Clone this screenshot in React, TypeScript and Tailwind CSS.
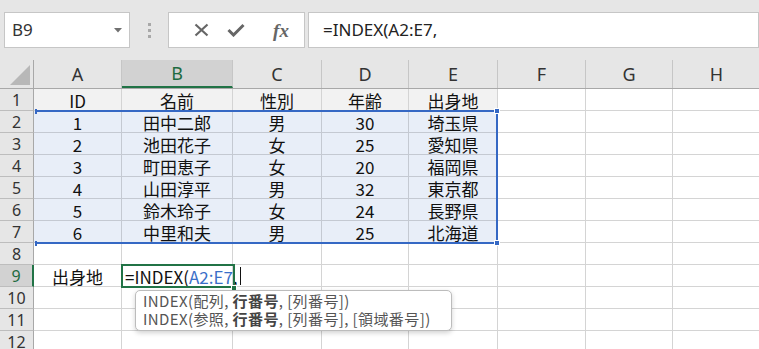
import React from 'react';

const COLS = ['A', 'B', 'C', 'D', 'E', 'F', 'G', 'H'];
const WIDTHS = ['w-[88px]', 'w-[111px]', 'w-[89px]', 'w-[87px]', 'w-[89px]', 'w-[88px]', 'w-[87px]', 'w-[88px]'];

const DATA: string[][] = [
  ['ID', '名前', '性別', '年齢', '出身地'],
  ['1', '田中二郎', '男', '30', '埼玉県'],
  ['2', '池田花子', '女', '25', '愛知県'],
  ['3', '町田恵子', '女', '20', '福岡県'],
  ['4', '山田淳平', '男', '32', '東京都'],
  ['5', '鈴木玲子', '女', '24', '長野県'],
  ['6', '中里和夫', '男', '25', '北海道'],
  [],
  ['出身地'],
  [],
  [],
  [],
];

const cellFont = { fontFamily: '"Noto Sans CJK JP", sans-serif' };

const FormulaBar: React.FC = () => (
  <div className="h-[60px] bg-[#e6e6e6] flex items-start pt-[12px] pl-[4px]">
    <div className="w-[126px] h-[36px] bg-white border border-[#c6c6c6] flex items-center justify-between pl-[7px] pr-[7px]">
      <span className="text-[17px] text-[#333]" style={{ fontFamily: '"Noto Sans", sans-serif' }}>B9</span>
      <svg width="8" height="5" viewBox="0 0 8 5"><path d="M0 0h8L4 4.5z" fill="#707070" /></svg>
    </div>
    <div className="w-[38px] h-[36px] flex flex-col items-center justify-center gap-[3px]">
      <div className="w-[3px] h-[3px] bg-[#a8a8a8]" />
      <div className="w-[3px] h-[3px] bg-[#a8a8a8]" />
      <div className="w-[3px] h-[3px] bg-[#a8a8a8]" />
    </div>
    <div className="w-[137px] h-[36px] bg-white border border-[#c6c6c6] flex items-center">
      <div className="w-[44px] flex justify-end pr-[4px]">
        <svg width="15" height="14" viewBox="0 0 15 14">
          <path d="M1.5 1.5l12 11M13.5 1.5l-12 11" stroke="#666" strokeWidth="2.2" />
        </svg>
      </div>
      <div className="w-[46px] flex justify-center">
        <svg width="18" height="14" viewBox="0 0 18 14">
          <path d="M1.5 7l5 5L16.5 2" stroke="#666" strokeWidth="3" fill="none" />
        </svg>
      </div>
      <div className="w-[40px] flex justify-center pl-[4px]">
        <span className="text-[19px] italic font-bold text-[#666] leading-none" style={{ fontFamily: '"Liberation Serif", serif' }}>fx</span>
      </div>
    </div>
    <div className="ml-[3px] flex-1 h-[36px] bg-white border border-[#c6c6c6] flex items-center pl-[14px]">
      <span className="text-[17px] text-[#222]" style={{ fontFamily: '"Noto Sans", sans-serif' }}>=INDEX(A2:E7,</span>
    </div>
  </div>
);

const HeaderRow: React.FC = () => (
  <div className="flex h-[29px] border-b border-[#a8a8a8] bg-[#e6e6e6]">
    <div className="w-[34px] shrink-0 h-full border-r border-[#a8a8a8] relative">
      <svg className="absolute left-[9px] top-[4px]" width="22" height="22" viewBox="0 0 22 22">
        <path d="M1 21H21V1z" fill="#b8b8b8" />
      </svg>
    </div>
    {COLS.map((c, i) => (
      <div
        key={c}
        className={`${WIDTHS[i]} shrink-0 h-full flex items-center justify-center text-[18px] border-r border-[#c6c6c6] ${
          c === 'B' ? 'bg-[#d2d2d2] text-[#1e6b40] border-b-2 border-b-[#217346]' : 'text-[#333]'
        }`}
        style={{ fontFamily: '"Noto Sans", sans-serif' }}
      >
        {c}
      </div>
    ))}
  </div>
);

const Row: React.FC<{ index: number }> = ({ index }) => {
  const r = index + 1;
  const values = DATA[index] || [];
  const selectedRow = r === 9;
  return (
    <div className="flex h-[22px]">
      <div
        className={`w-[34px] shrink-0 h-full flex items-center justify-center text-[16px] leading-[20px] border-b border-[#bdbdbd] ${
          selectedRow ? 'bg-[#d2d2d2] text-[#1e6b40] border-r-2 border-r-[#217346]' : 'bg-[#e6e6e6] text-[#333] border-r border-r-[#a8a8a8]'
        }`}
        style={{ fontFamily: '"Noto Sans", sans-serif' }}
      >
        {r}
      </div>
      {COLS.map((c, i) => {
        let bg = 'bg-white';
        let line = 'border-[#d4d4d4]';
        if (i < 5 && r === 1) bg = 'bg-[#f2f2f2]';
        if (i < 5 && r >= 2 && r <= 7) {
          bg = 'bg-[#e8eef8]';
          line = 'border-[#c4c9d2]';
        }
        const isFormula = r === 9 && c === 'B';
        return (
          <div
            key={c}
            className={`${WIDTHS[i]} shrink-0 h-full border-r border-b ${line} ${bg} flex items-end ${
              isFormula ? 'justify-start pl-[3px] overflow-visible whitespace-nowrap relative z-10' : 'justify-center'
            } text-[17px] leading-[19px] text-[#111]`}
            style={cellFont}
          >
            {isFormula ? (
              <span className="flex items-end">
                <span>=INDEX(</span>
                <span className="text-[#3a6fc8]">A2:E7</span>
                <span>,</span>
                <span className="ml-[2px] mb-[1px] w-[1px] h-[18px] bg-[#111]" />
              </span>
            ) : (
              values[i] || ''
            )}
          </div>
        );
      })}
    </div>
  );
};

const App: React.FC = () => (
  <div className="w-[759px] h-[349px] overflow-hidden bg-white select-none">
    <FormulaBar />
    <div className="relative">
      <HeaderRow />
      {DATA.map((_, i) => (
        <Row key={i} index={i} />
      ))}

      {/* reference range A2:E7 */}
      <div className="absolute left-[35px] top-[50px] w-[463px] h-[134px] border-t-2 border-r-2 border-b-2 border-[#3568c4] pointer-events-none z-20" />
      <div className="absolute left-[35px] top-[49px] w-[2px] h-[5px] bg-[#3568c4] z-20" />
      <div className="absolute left-[35px] top-[181px] w-[2px] h-[5px] bg-[#3568c4] z-20" />
      <div className="absolute left-[494px] top-[48px] w-[6px] h-[6px] bg-[#3568c4] border border-white z-30" />
      <div className="absolute left-[494px] top-[180px] w-[6px] h-[6px] bg-[#3568c4] border border-white z-30" />

      {/* active cell B9 */}
      <div className="absolute left-[121px] top-[204px] w-[114px] h-[24px] border-2 border-[#217346] pointer-events-none z-20" />
      <div className="absolute left-[231px] top-[225px] w-[6px] h-[6px] bg-[#217346] border border-white z-30" />

      {/* argument tooltip */}
      <div
        className="absolute left-[135px] top-[230px] w-[317px] h-[41px] bg-white border border-[#bcbcbc] rounded-[5px] shadow-[0_2px_5px_rgba(0,0,0,0.18)] px-[7px] pt-[1px] text-[15px] tracking-[0.4px] leading-[18px] text-[#555] z-40"
        style={cellFont}
      >
        <div className="whitespace-nowrap">
          INDEX(配列, <span className="font-bold text-[#444]">行番号</span>, [列番号])
        </div>
        <div className="whitespace-nowrap">
          INDEX(参照, <span className="font-bold text-[#444]">行番号</span>, [列番号], [領域番号])
        </div>
      </div>
    </div>
  </div>
);

export default App;
